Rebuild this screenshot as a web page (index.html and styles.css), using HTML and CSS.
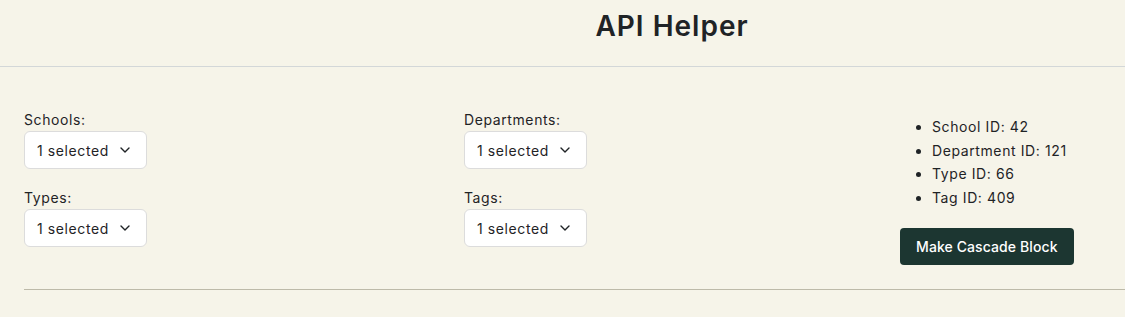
FILE: index.html
```html
<!DOCTYPE html>
<html>

<head>
    <link rel="stylesheet" href="styles.css">
</head>

<body>
    <div class="page">
        <header class="top_bar">
            <h1 class="title">API Helper</h1>
        </header>

        <div id="main" class="helper">
            <div class="helper_col">
                <div class="field">
                    <label class="field_label">Schools:</label>
                    <button class="picker">1 selected
                        <svg class="chevron" width="10" height="6" viewBox="0 0 10 6"><path d="M1 1l4 4 4-4" /></svg>
                    </button>
                </div>
                <div class="field">
                    <label class="field_label">Types:</label>
                    <button class="picker">1 selected
                        <svg class="chevron" width="10" height="6" viewBox="0 0 10 6"><path d="M1 1l4 4 4-4" /></svg>
                    </button>
                </div>
            </div>

            <div class="helper_col">
                <div class="field">
                    <label class="field_label">Departments:</label>
                    <button class="picker">1 selected
                        <svg class="chevron" width="10" height="6" viewBox="0 0 10 6"><path d="M1 1l4 4 4-4" /></svg>
                    </button>
                </div>
                <div class="field">
                    <label class="field_label">Tags:</label>
                    <button class="picker">1 selected
                        <svg class="chevron" width="10" height="6" viewBox="0 0 10 6"><path d="M1 1l4 4 4-4" /></svg>
                    </button>
                </div>
            </div>

            <div class="helper_col result">
                <ul class="id_list">
                    <li>School ID: 42</li>
                    <li>Department ID: 121</li>
                    <li>Type ID: 66</li>
                    <li>Tag ID: 409</li>
                </ul>
                <button class="make_button">Make Cascade Block</button>
            </div>
        </div>

        <hr class="divider">
    </div>
</body>

</html>
```

FILE: styles.css
```css
html,
body {
    margin: 0;
    overflow: hidden;
    background: #f6f4e9;
}

body {
    font-family: "Inter", "Liberation Sans", sans-serif;
    color: #1f2326;
    font-size: 14px;
    letter-spacing: 0.6px;
}

.page {
    width: 1344px;
}

.top_bar {
    border-bottom: 1px solid #d3d7d8;
    height: 66px;
    display: flex;
    align-items: center;
    justify-content: center;
}

.title {
    margin: 0;
    font-size: 28px;
    font-weight: 600;
    letter-spacing: 1px;
    line-height: 34px;
    padding-bottom: 14px;
}

.helper {
    display: grid;
    grid-template-columns: 440px 436px 1fr;
    padding: 43px 24px 0 24px;
}

.field {
    margin-bottom: 19px;
}

.field_label {
    display: block;
    line-height: 20px;
    margin-bottom: 1px;
}

.picker {
    display: flex;
    align-items: center;
    gap: 11px;
    height: 38px;
    padding: 0 16px 0 12px;
    background: white;
    border: 1px solid #dcdcdc;
    border-radius: 6px;
    font-family: inherit;
    font-size: 14px;
    letter-spacing: 0.6px;
    color: #1f2326;
}

.chevron path {
    fill: none;
    stroke: #1f2326;
    stroke-width: 1.4;
    stroke-linecap: round;
    stroke-linejoin: round;
}

.result {
    padding-top: 5px;
}

.id_list {
    margin: 0 0 19px 0;
    padding-left: 32px;
    line-height: 23.6px;
}

.make_button {
    display: block;
    height: 37px;
    padding: 0 16px;
    border: none;
    border-radius: 4px;
    background: #1c3631;
    color: white;
    font-family: inherit;
    font-size: 14px;
    font-weight: 500;
    letter-spacing: 0.1px;
}

.divider {
    margin: 23px 0 0 24px;
    border: none;
    border-top: 1px solid #bdbaa9;
}
```
